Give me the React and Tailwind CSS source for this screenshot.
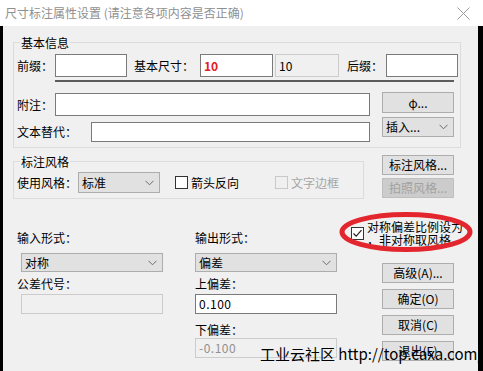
import React from 'react';

// small win32-style controls
const Edit = ({ className, children }) => (
  <div className={'bg-white border border-[#7a7a7a] flex items-center pl-[3px] shrink-0 ' + className}>
    {children}
  </div>
);

const Disabled = ({ className, children }) => (
  <div className={'bg-[#f0f0f0] border border-[#cccccc] flex items-center pl-[3px] shrink-0 ' + className}>
    {children}
  </div>
);

const Button = ({ className, children, disabled }) => (
  <div
    className={
      (disabled
        ? 'bg-[#cccccc] border-[#bfbfbf] text-[#a2a2a2] '
        : 'bg-[#e1e1e1] border-[#adadad] text-black ') +
      'border flex items-center justify-center shrink-0 leading-none ' +
      className
    }
  >
    {children}
  </div>
);

const Chevron = () => (
  <svg width="9" height="6" viewBox="0 0 9 6" className="shrink-0">
    <polyline points="0.5,0.8 4.5,4.8 8.5,0.8" fill="none" stroke="#6b6b6b" strokeWidth="1" />
  </svg>
);

const Combo = ({ className, children }) => (
  <div
    className={
      'bg-[#e1e1e1] border border-[#adadad] flex items-center justify-between pl-[3px] pr-[5px] shrink-0 ' +
      className
    }
  >
    <span>{children}</span>
    <Chevron />
  </div>
);

const Check = ({ checked, disabled }) => (
  <div
    className={
      'w-[13px] h-[13px] shrink-0 border flex items-center justify-center ' +
      (disabled ? 'border-[#c8c8c8] bg-[#f0f0f0]' : 'border-[#333333] bg-white')
    }
  >
    {checked && (
      <svg width="11" height="11" viewBox="0 0 11 11">
        <polyline points="1.5,5.5 4.2,8.2 9.5,2.2" fill="none" stroke="#222" strokeWidth="1.2" />
      </svg>
    )}
  </div>
);

const Group = ({ title, className, children }) => (
  <div className={'relative border border-[#dcdcdc] ' + className}>
    <span className="absolute left-[6px] top-[-9px] px-[1px] bg-[#f0f0f0] leading-[17px]">{title}</span>
    {children}
  </div>
);

export default function App() {
  return (
    <div className="relative w-[483px] h-[371px] overflow-hidden flex flex-col bg-[#f0f0f0] text-[12px] text-black font-['Noto_Sans_CJK_SC','Microsoft_YaHei',sans-serif]">
      {/* title bar */}
      <div className="h-[26px] shrink-0 bg-white flex items-center justify-between pl-[5px] pr-[13px]">
        <span className="text-[#8f8f8f] leading-none">尺寸标注属性设置 (请注意各项内容是否正确)</span>
        <svg width="13" height="13" viewBox="0 0 13 13">
          <line x1="0.5" y1="0.5" x2="12.5" y2="12.5" stroke="#9a9a9a" strokeWidth="1" />
          <line x1="12.5" y1="0.5" x2="0.5" y2="12.5" stroke="#9a9a9a" strokeWidth="1" />
        </svg>
      </div>

      <div className="flex flex-1">
        <div className="w-[3px] bg-black" />
        <div className="flex-1 pl-[10px]">
          {/* 基本信息 */}
          <Group title="基本信息" className="mt-[16px] w-[448px] pt-[11px] pb-[5px] pl-[3px]">
            <div className="flex items-center h-[23px]">
              <span className="w-[38px] shrink-0">前缀：</span>
              <Edit className="w-[72px] h-[23px]" />
              <span className="ml-[7px] w-[66px] shrink-0">基本尺寸：</span>
              <Edit className="w-[73px] h-[23px] text-[#e0201f] font-bold pl-[3px]">10</Edit>
              <Disabled className="ml-[2px] w-[64px] h-[23px] !items-start pt-[2px] border-[#a9a9a9]">10</Disabled>
              <span className="ml-[8px] w-[39px] shrink-0">后缀：</span>
              <Edit className="w-[72px] h-[23px]" />
            </div>
            <div className="mt-[3px] ml-[38px] w-[399px] h-[2px] bg-[#5c5c5c]" />
            <div className="mt-[10px] flex items-start">
              <span className="w-[38px] shrink-0 mt-[1px] h-[23px] flex items-center">附注：</span>
              <Edit className="mt-[1px] w-[315px] h-[23px]" />
              <Button className="ml-[12px] w-[72px] h-[21px]">φ...</Button>
            </div>
            <div className="mt-[1px] flex items-start">
              <span className="w-[74px] shrink-0 mt-[5px] h-[20px] flex items-center">文本替代：</span>
              <Edit className="mt-[5px] w-[279px] h-[20px]" />
              <Combo className="ml-[12px] w-[72px] h-[20px]">插入...</Combo>
            </div>
          </Group>

          {/* 标注风格 */}
          <div className="mt-[6px] flex items-start">
            <Group title="标注风格" className="mt-[7px] w-[351px] pt-[10px] pb-[5px] pl-[3px]">
              <div className="flex items-center h-[21px]">
                <span className="w-[61px] shrink-0">使用风格：</span>
                <Combo className="w-[82px] h-[21px]">标准</Combo>
                <div className="ml-[15px]">
                  <Check />
                </div>
                <span className="ml-[3px]">箭头反向</span>
                <div className="ml-[36px]">
                  <Check disabled />
                </div>
                <span className="ml-[3px] text-[#a6a6a6]">文字边框</span>
              </div>
            </Group>
            <div className="ml-[18px] flex flex-col">
              <Button className="mt-[1px] w-[72px] h-[20px]">标注风格...</Button>
              <Button disabled className="mt-[3px] w-[72px] h-[20px]">拍照风格...</Button>
            </div>
          </div>

          {/* 输入/输出 */}
          <div className="mt-[23px] flex items-start">
            <div className="w-[338px] shrink-0 flex flex-col">
              <div className="mt-[9px] flex h-[14px] leading-[14px]">
                <span className="ml-[4px] w-[178px] shrink-0">输入形式：</span>
                <span>输出形式：</span>
              </div>
              <div className="mt-[8px] flex">
                <Combo className="ml-[8px] w-[142px] h-[19px]">对称</Combo>
                <Combo className="ml-[32px] w-[142px] h-[19px]">偏差</Combo>
              </div>
              <div className="mt-[5px] flex h-[14px] leading-[14px]">
                <span className="ml-[4px] w-[178px] shrink-0">公差代号：</span>
                <span>上偏差：</span>
              </div>
              <div className="mt-[3px] flex">
                <Disabled className="ml-[8px] w-[142px] h-[20px]" />
                <Edit className="ml-[32px] w-[142px] h-[20px] tracking-[0.5px]">0.100</Edit>
              </div>
              <div className="mt-[9px] ml-[182px] h-[14px] leading-[14px]">下偏差：</div>
              <Disabled className="mt-[1px] ml-[182px] w-[142px] h-[20px] text-[#8f8f8f] tracking-[0.5px]">-0.100</Disabled>
            </div>

            <div className="flex flex-col">
              <div className="flex items-start">
                <div className="mt-[5px]">
                  <Check checked />
                </div>
                <div className="ml-[3px] mt-[-2px] mb-[2px] leading-[13px] whitespace-nowrap">
                  <div>对称偏差比例设为</div>
                  <div>，非对称取风格</div>
                </div>
              </div>
              <Button className="mt-[15px] ml-[31px] w-[72px] h-[20px]">高级(A)...</Button>
              <Button className="mt-[6px] ml-[31px] w-[72px] h-[20px]">确定(O)</Button>
              <Button className="mt-[6px] ml-[31px] w-[72px] h-[20px]">取消(C)</Button>
              <Button className="mt-[6px] ml-[31px] w-[72px] h-[20px]">退出(E)</Button>
            </div>
          </div>
        </div>
        <div className="w-[5px] bg-black" />
      </div>

      {/* red marker drawn over the checkbox */}
      <svg className="absolute left-[336px] top-[209px]" width="140" height="46" viewBox="0 0 140 46">
        <ellipse cx="70" cy="23" rx="64" ry="17.5" fill="none" stroke="#e3262d" strokeWidth="5" />
      </svg>

      {/* watermark */}
      <div className="absolute left-[260px] top-[345px] text-[15px] leading-[17px] text-black whitespace-nowrap">
        工业云社区 http://top.caxa.com/
      </div>
    </div>
  );
}
